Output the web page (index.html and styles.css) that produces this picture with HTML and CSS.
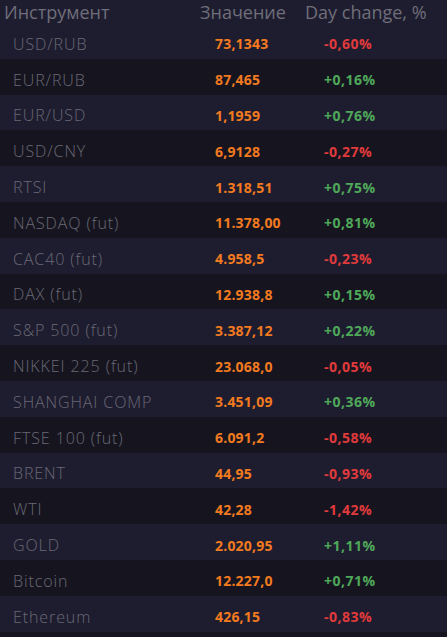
FILE: index.html
```html
<!DOCTYPE html>
<html lang="ru">
<head>
<meta charset="utf-8">
<link rel="stylesheet" href="styles.css">
</head>
<body>
<div class="board">
  <div class="head">
    <div class="h-name">Инструмент</div>
    <div class="h-val">Значение</div>
    <div class="h-chg">Day change, %</div>
  </div>
  <div class="row"><div class="name">USD/RUB</div><div class="val">73,1343</div><div class="chg down">-0,60%</div></div>
  <div class="row"><div class="name">EUR/RUB</div><div class="val">87,465</div><div class="chg up">+0,16%</div></div>
  <div class="row"><div class="name">EUR/USD</div><div class="val">1,1959</div><div class="chg up">+0,76%</div></div>
  <div class="row"><div class="name">USD/CNY</div><div class="val">6,9128</div><div class="chg down">-0,27%</div></div>
  <div class="row"><div class="name">RTSI</div><div class="val">1.318,51</div><div class="chg up">+0,75%</div></div>
  <div class="row"><div class="name">NASDAQ (fut)</div><div class="val">11.378,00</div><div class="chg up">+0,81%</div></div>
  <div class="row"><div class="name">CAC40 (fut)</div><div class="val">4.958,5</div><div class="chg down">-0,23%</div></div>
  <div class="row"><div class="name">DAX (fut)</div><div class="val">12.938,8</div><div class="chg up">+0,15%</div></div>
  <div class="row"><div class="name">S&amp;P 500 (fut)</div><div class="val">3.387,12</div><div class="chg up">+0,22%</div></div>
  <div class="row"><div class="name">NIKKEI 225 (fut)</div><div class="val">23.068,0</div><div class="chg down">-0,05%</div></div>
  <div class="row"><div class="name">SHANGHAI COMP</div><div class="val">3.451,09</div><div class="chg up">+0,36%</div></div>
  <div class="row"><div class="name">FTSE 100 (fut)</div><div class="val">6.091,2</div><div class="chg down">-0,58%</div></div>
  <div class="row"><div class="name">BRENT</div><div class="val">44,95</div><div class="chg down">-0,93%</div></div>
  <div class="row"><div class="name">WTI</div><div class="val">42,28</div><div class="chg down">-1,42%</div></div>
  <div class="row"><div class="name">GOLD</div><div class="val">2.020,95</div><div class="chg up">+1,11%</div></div>
  <div class="row"><div class="name">Bitcoin</div><div class="val">12.227,0</div><div class="chg up">+0,71%</div></div>
  <div class="row"><div class="name">Ethereum</div><div class="val">426,15</div><div class="chg down">-0,83%</div></div>
</div>
</body>
</html>
```

FILE: styles.css
```css
html, body {
  margin: 0;
  padding: 0;
  background: #15141f;
}
.board {
  width: 447px;
  background: #1e1d2f;
}
.head {
  display: grid;
  grid-template-columns: 200px 105px 1fr;
  height: 23px;
  align-items: center;
  font-family: "Open Sans", sans-serif;
  font-size: 18px;
  color: #6f6e7a;
  background: #1e1d2f;
  white-space: nowrap;
}
.h-name { padding-left: 4px; }
.row {
  display: grid;
  grid-template-columns: 215px 109px 1fr;
  height: 35.8px;
  box-sizing: border-box;
  padding-top: 6px;
  align-items: center;
  background: #1e1d2f;
}
.row:nth-child(odd) {
  background: #16151f;
}
.name {
  padding-left: 13px;
  font-family: "Open Sans", sans-serif;
  font-weight: 300;
  font-size: 16px;
  letter-spacing: 0.9px;
  color: #6a6976;
  white-space: nowrap;
}
.val, .chg {
  font-family: "Open Sans", sans-serif;
  font-weight: 700;
  font-size: 14px;
}
.val { color: #f27a1f; letter-spacing: 0.2px; }
.chg { letter-spacing: 0.5px; }
.up { color: #4fa85a; }
.down { color: #e03a3c; }
```
